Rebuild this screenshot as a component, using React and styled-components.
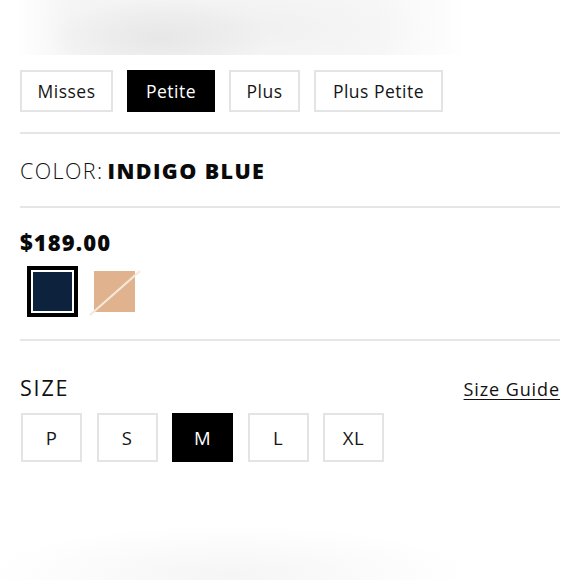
import styled, { createGlobalStyle } from "styled-components";

const GlobalStyle = createGlobalStyle`
  html, body {
    margin: 0;
    padding: 0;
    background: #ffffff;
  }
  body {
    font-family: "Open Sans", "Liberation Sans", sans-serif;
    color: #111111;
  }
`;

const fits = ["Misses", "Petite", "Plus", "Plus Petite"];
const fitWidths = [93, 88, 71, 129];
const sizes = ["P", "S", "M", "L", "XL"];

export default function App() {
  return (
    <Page>
      <GlobalStyle />
      <TopHaze />
      <Content>
        <FitRow>
          {fits.map((f, i) => (
            <FitButton key={f} $w={fitWidths[i]} $active={f === "Petite"}>
              {f}
            </FitButton>
          ))}
        </FitRow>
        <Divider />
        <ColorRow>
          <ColorLabel>COLOR:</ColorLabel>
          <ColorName>INDIGO BLUE</ColorName>
        </ColorRow>
        <Divider />
        <PriceBlock>
          <Price>$189.00</Price>
          <Swatches>
            <Swatch $color="#0d223d" $selected />
            <Swatch $color="#e0b28e" $unavailable>
              <Slash viewBox="0 0 52 46">
                <line x1="1" y1="45" x2="51" y2="1" stroke="#f3e9dc" strokeWidth="2.2" />
              </Slash>
            </Swatch>
          </Swatches>
        </PriceBlock>
        <Divider />
        <SizeHeader>
          <SizeLabel>SIZE</SizeLabel>
          <SizeGuide>Size Guide</SizeGuide>
        </SizeHeader>
        <SizeRow>
          {sizes.map((s) => (
            <SizeButton key={s} $active={s === "M"}>
              {s}
            </SizeButton>
          ))}
        </SizeRow>
      </Content>
      <BottomHaze />
    </Page>
  );
}

const Page = styled.div`
  width: 580px;
  height: 580px;
  overflow: hidden;
  background: #ffffff;
  display: flex;
  flex-direction: column;
`;

const TopHaze = styled.div`
  height: 55px;
  flex-shrink: 0;
  background:
    radial-gradient(ellipse 110px 40px at 160px 38px, rgba(228, 228, 228, 0.8), rgba(228, 228, 228, 0) 100%),
    radial-gradient(ellipse 200px 45px at 230px 28px, rgba(238, 238, 238, 0.75), rgba(238, 238, 238, 0) 100%),
    linear-gradient(90deg, rgba(250, 250, 250, 0) 15px, #f5f5f5 70px, #f7f7f7 380px, rgba(252, 252, 252, 0) 470px);
`;

const Content = styled.div`
  padding: 15px 20px 0 20px;
  display: flex;
  flex-direction: column;
`;

const FitRow = styled.div`
  display: flex;
  gap: 14px;
  margin-bottom: 20px;
`;

const FitButton = styled.div`
  width: ${(p) => p.$w}px;
  height: 42px;
  flex-shrink: 0;
  box-sizing: border-box;
  display: flex;
  align-items: center;
  justify-content: center;
  border: 2px solid ${(p) => (p.$active ? "#000000" : "#e4e4e4")};
  background: ${(p) => (p.$active ? "#000000" : "#ffffff")};
  color: ${(p) => (p.$active ? "#ffffff" : "#151515")};
  font-size: 17.5px;
  letter-spacing: 0.5px;
`;

const Divider = styled.div`
  height: 2px;
  background: #e6e6e6;
`;

const ColorRow = styled.div`
  height: 72px;
  display: flex;
  align-items: center;
  font-size: 21.5px;
  letter-spacing: 1.4px;
`;

const ColorLabel = styled.span`
  font-weight: 300;
  margin-right: 4px;
`;

const ColorName = styled.span`
  font-weight: 800;
  color: #0a0a0a;
`;

const PriceBlock = styled.div`
  padding: 22px 0 22px 0;
  display: flex;
  flex-direction: column;
  gap: 12px;
`;

const Price = styled.div`
  font-size: 22px;
  line-height: 24px;
  font-weight: 800;
  letter-spacing: 1.1px;
  color: #0a0a0a;
`;

const Swatches = styled.div`
  display: flex;
  align-items: center;
  gap: 16px;
  padding-left: 7px;
`;

const Swatch = styled.div`
  position: relative;
  box-sizing: border-box;
  width: ${(p) => (p.$selected ? 51 : 41)}px;
  height: ${(p) => (p.$selected ? 51 : 41)}px;
  background: ${(p) => p.$color};
  border: ${(p) => (p.$selected ? "4px solid #000000" : "none")};
  box-shadow: ${(p) => (p.$selected ? "inset 0 0 0 2px #ffffff" : "none")};
`;

const Slash = styled.svg`
  position: absolute;
  left: -5px;
  top: -1px;
  width: 52px;
  height: 46px;
  overflow: visible;
`;

const SizeHeader = styled.div`
  margin-top: 34px;
  height: 24px;
  display: flex;
  align-items: center;
  justify-content: space-between;
`;

const SizeLabel = styled.div`
  font-size: 21.5px;
  letter-spacing: 1.8px;
  color: #111111;
`;

const SizeGuide = styled.a`
  font-size: 18px;
  letter-spacing: 0.9px;
  color: #111111;
  text-decoration: underline;
  text-underline-offset: 3px;
  margin-top: 4px;
`;

const SizeRow = styled.div`
  margin-top: 14px;
  padding-left: 1px;
  display: flex;
  gap: 14.5px;
`;

const SizeButton = styled.div`
  width: 61px;
  height: 49px;
  flex-shrink: 0;
  box-sizing: border-box;
  display: flex;
  align-items: center;
  justify-content: center;
  border: 2px solid ${(p) => (p.$active ? "#000000" : "#e4e4e4")};
  background: ${(p) => (p.$active ? "#000000" : "#ffffff")};
  color: ${(p) => (p.$active ? "#ffffff" : "#151515")};
  font-size: 18.5px;
  letter-spacing: 0.5px;
`;

const BottomHaze = styled.div`
  margin-top: auto;
  height: 60px;
  background: radial-gradient(ellipse 240px 50px at 230px 55px, rgba(244, 244, 244, 0.9), rgba(248, 248, 248, 0) 100%);
`;
